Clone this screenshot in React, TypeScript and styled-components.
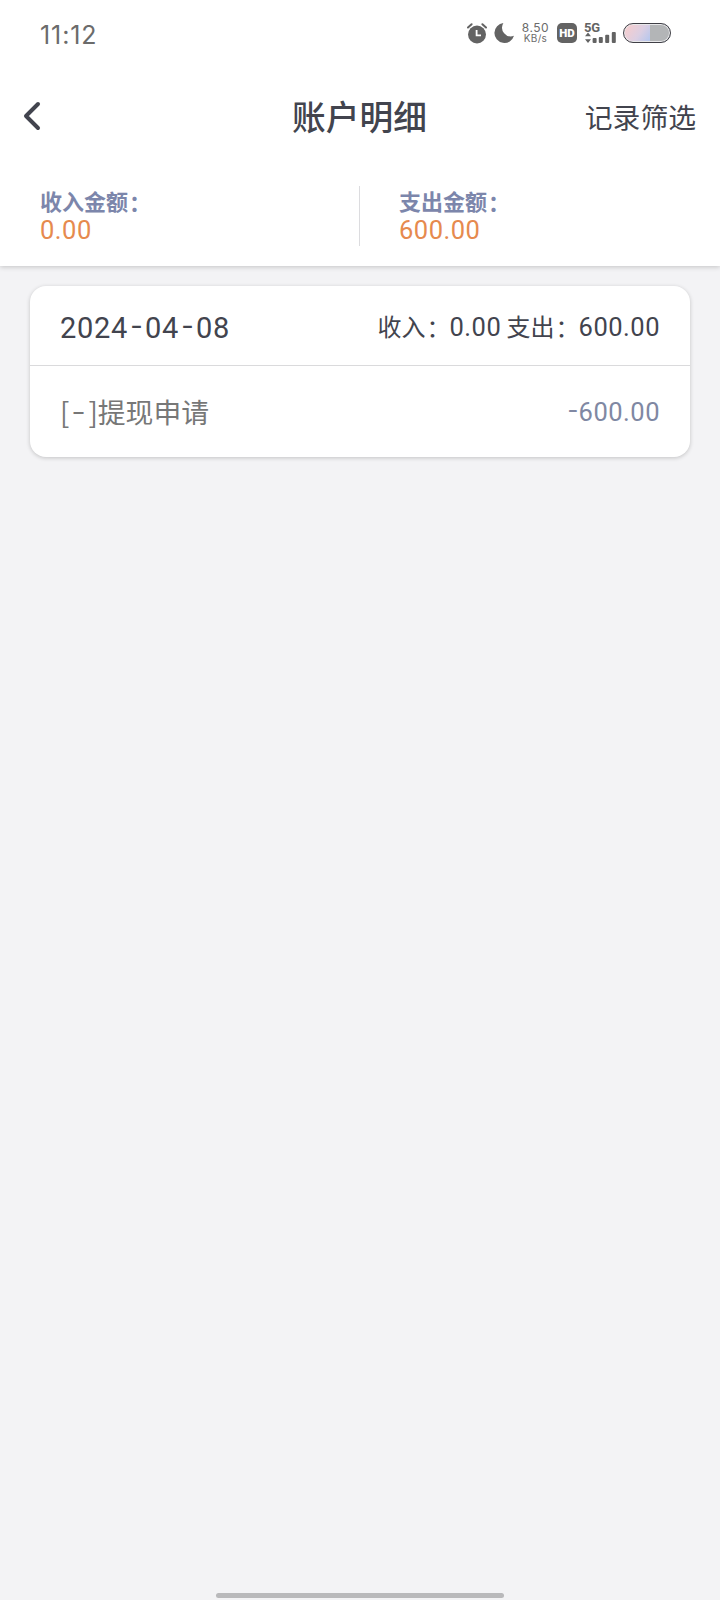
import React from "react";
import styled, { createGlobalStyle } from "styled-components";

const Global = createGlobalStyle`
  * { box-sizing: border-box; }
  body { margin: 0; background: #f3f3f5; }
`;

const digits = `Roboto, "Noto Sans CJK SC", sans-serif`;
const cjk = `"Noto Sans CJK SC", sans-serif`;

const Screen = styled.div`
  width: 720px;
  height: 1600px;
  display: flex;
  flex-direction: column;
  background: #f3f3f5;
  font-family: ${cjk};
  color: #42444e;
  white-space: nowrap;
`;

const Top = styled.header`
  height: 266px;
  flex: none;
  background: #fff;
  box-shadow: 0 1px 5px rgba(0, 0, 0, 0.2);
`;

const StatusBar = styled.div`
  height: 66px;
  display: flex;
  justify-content: space-between;
  padding: 0 49px 0 40px;
  align-items: center;
`;

const Clock = styled.time`
  font: 400 25px/30px Inter, sans-serif;
  letter-spacing: 0.9px;
  color: #6b6b6b;
  padding-top: 3px;
`;

const StatusIcons = styled.div`
  display: flex;
  align-items: center;
  svg { display: block; }
`;

const Speed = styled.div`
  width: 27px;
  margin: 0 8px 0 8px;
  display: flex;
  flex-direction: column;
  align-items: center;
  font-family: Inter, sans-serif;
  color: #6b6b6b;
`;

const SpeedLine = styled.span<{ $size: number; $gap: number }>`
  font-size: ${(p) => p.$size}px;
  letter-spacing: ${(p) => p.$gap}px;
  line-height: 11px;
`;

const HdBadge = styled.div`
  width: 20px;
  height: 20px;
  margin-right: 7px;
  border-radius: 5px;
  background: #636363;
  color: #fff;
  font: 900 11.5px/20px Roboto, sans-serif;
  text-align: center;
`;

const Network = styled.div`
  width: 33px;
  height: 22px;
  margin-right: 6px;
  display: flex;
  flex-direction: column;
`;

const NetworkLabel = styled.span`
  font: 700 13px/11px Roboto, sans-serif;
  letter-spacing: -0.3px;
  color: #636363;
  height: 10px;
`;

const Battery = styled.div`
  width: 48px;
  height: 20px;
  border: 1.5px solid #3f3f46;
  border-radius: 10px;
  background: linear-gradient(90deg, transparent 57%, #b3b5b7 57%),
    linear-gradient(125deg, #f3cdd0 10%, #dccfe2 38%, #b3c6ee 65%);
  box-shadow: inset 0 0 0 1px #e8e8ea;
`;

const NavBar = styled.nav`
  height: 100px;
  display: grid;
  grid-template-columns: 1fr auto 1fr;
  align-items: center;
  padding: 0 24px 0 22px;
`;

const Title = styled.h1`
  margin: 0 0 1px;
  padding-left: 1px;
  font: 500 33.7px/50px ${cjk};
`;

const FilterLink = styled.a`
  justify-self: end;
  font-size: 27.8px;
  line-height: 42px;
  padding-bottom: 1px;
`;

const Totals = styled.div`
  display: flex;
  height: 100px;
  padding-top: 20px;
`;

const Total = styled.div<{ $divided?: boolean }>`
  width: 360px;
  height: 60px;
  padding-left: ${(p) => (p.$divided ? 40 : 39)}px;
  border-right: ${(p) => (p.$divided ? "1px solid #dcdcdf" : "none")};
`;

const TotalLabel = styled.div`
  font-weight: 700;
  font-size: 22px;
  line-height: 28px;
  color: #7c86ab;
  height: 30px;
`;

const TotalValue = styled.div`
  font-family: ${digits};
  font-size: 25.5px;
  letter-spacing: 0.5px;
  line-height: 28px;
  color: #e68a4e;
`;

const Card = styled.section`
  width: 660px;
  height: 171px;
  margin: 20px 30px 0;
  border-radius: 16px;
  background: #fff;
  box-shadow: 0 1px 4px rgba(0, 0, 0, 0.2);
`;

const Row = styled.div<{ $height: number; $line?: boolean }>`
  height: ${(p) => p.$height}px;
  display: flex;
  align-items: center;
  justify-content: space-between;
  padding: 0 30px;
  border-bottom: ${(p) => (p.$line ? "1px solid #dadadc" : "none")};
`;

const DateText = styled.span`
  font: 400 29px/40px ${digits};
  letter-spacing: 0.7px;
  padding-top: 4px;
`;

const Summary = styled.span`
  font-size: 24px;
  line-height: 36px;
  padding-top: 2px;
  white-space: pre;
`;

const Num = styled.span`
  font-family: ${digits};
  font-size: 25.5px;
  letter-spacing: 0.5px;
`;

const Colon = styled.span`
  display: inline-block;
  transform: translate(${(p: { $shift?: number }) => p.$shift ?? 1}px, 1px);
`;

const Entry = styled.span`
  font-size: 27.8px;
  line-height: 40px;
  padding-bottom: 2px;
  color: #777;
`;

const Amount = styled.span`
  font: 400 25.5px/36px ${digits};
  letter-spacing: 0.5px;
  padding-top: 1px;
  color: #8088a3;
`;

const Dash = styled.span<{ $width: number; $lift?: number; $stretch?: number }>`
  display: inline-block;
  width: ${(p) => p.$width}px;
  text-align: center;
  letter-spacing: 0;
  transform: translateY(${(p) => -(p.$lift ?? 1)}px) scaleX(${(p) => p.$stretch ?? 1.25});
`;

const HomeArea = styled.footer`
  margin-top: auto;
  padding-bottom: 2px;
  display: flex;
  justify-content: center;
`;

const HomeBar = styled.div`
  width: 288px;
  height: 5px;
  border-radius: 3px;
  background: #b9b9bb;
`;

const AlarmIcon = () => (
  <svg width="20" height="21" viewBox="0 0 20 21" fill="none">
    <circle cx="10" cy="11.5" r="9" fill="#636363" />
    <path d="M1 4.5 4.6 1.2M19 4.5 15.4 1.2" stroke="#636363" strokeWidth="2" strokeLinecap="round" />
    <path d="M9.6 7v5.3H14" stroke="#fff" strokeWidth="1.8" />
  </svg>
);

const Moon = styled.svg`
  margin-left: 7px;
`;

const MoonIcon = () => (
  <Moon width="20" height="20" viewBox="0 0 20 20">
    <path d="M9.4 0A10 10 0 1 0 20 12.8 8.8 8.8 0 0 1 9.4 0Z" fill="#636363" />
  </Moon>
);

const SignalIcon = () => (
  <svg width="33" height="12" viewBox="0 0 33 12" fill="#636363">
    <path d="M1 4.2 4 .4 7 4.2ZM1 7.2h6L4 11Z" />
    <rect x="8.6" y="6" width="4" height="5" rx="1" />
    <rect x="14.8" y="5" width="4" height="6" rx="1" />
    <rect x="21.2" y="2.8" width="4" height="8.2" rx="1" />
    <rect x="27.8" y="0" width="4" height="11" rx="1" />
  </svg>
);

const BackIcon = () => (
  <svg width="20" height="30" viewBox="0 0 20 30" fill="none">
    <path d="M16 3 4 15l12 12" stroke="#42444e" strokeWidth="4" strokeLinecap="round" strokeLinejoin="round" />
  </svg>
);

export default function App() {
  return (
    <Screen>
      <Global />
      <Top>
        <StatusBar>
          <Clock>11:12</Clock>
          <StatusIcons>
            <AlarmIcon />
            <MoonIcon />
            <Speed>
              <SpeedLine $size={12} $gap={0.5}>8.50</SpeedLine>
              <SpeedLine $size={10} $gap={0.3}>KB/s</SpeedLine>
            </Speed>
            <HdBadge>HD</HdBadge>
            <Network>
              <NetworkLabel>5G</NetworkLabel>
              <SignalIcon />
            </Network>
            <Battery />
          </StatusIcons>
        </StatusBar>
        <NavBar>
          <BackIcon />
          <Title>账户明细</Title>
          <FilterLink>记录筛选</FilterLink>
        </NavBar>
        <Totals>
          <Total $divided>
            <TotalLabel>收入金额<Colon>：</Colon></TotalLabel>
            <TotalValue>0.00</TotalValue>
          </Total>
          <Total>
            <TotalLabel>支出金额<Colon>：</Colon></TotalLabel>
            <TotalValue>600.00</TotalValue>
          </Total>
        </Totals>
      </Top>
      <Card>
        <Row $height={80} $line>
          <DateText>
            2024<Dash $width={17} $lift={2}>-</Dash>04<Dash $width={17} $lift={2}>-</Dash>08
          </DateText>
          <Summary>
            收入<Colon>：</Colon><Num>0.00</Num> 支出<Colon>：</Colon><Num>600.00</Num>
          </Summary>
        </Row>
        <Row $height={91}>
          <Entry>
            [<Dash $width={19} $lift={2} $stretch={1.4}>-</Dash>]提现申请
          </Entry>
          <Amount>
            <Dash $width={12} $lift={2}>-</Dash>600.00
          </Amount>
        </Row>
      </Card>
      <HomeArea>
        <HomeBar />
      </HomeArea>
    </Screen>
  );
}
